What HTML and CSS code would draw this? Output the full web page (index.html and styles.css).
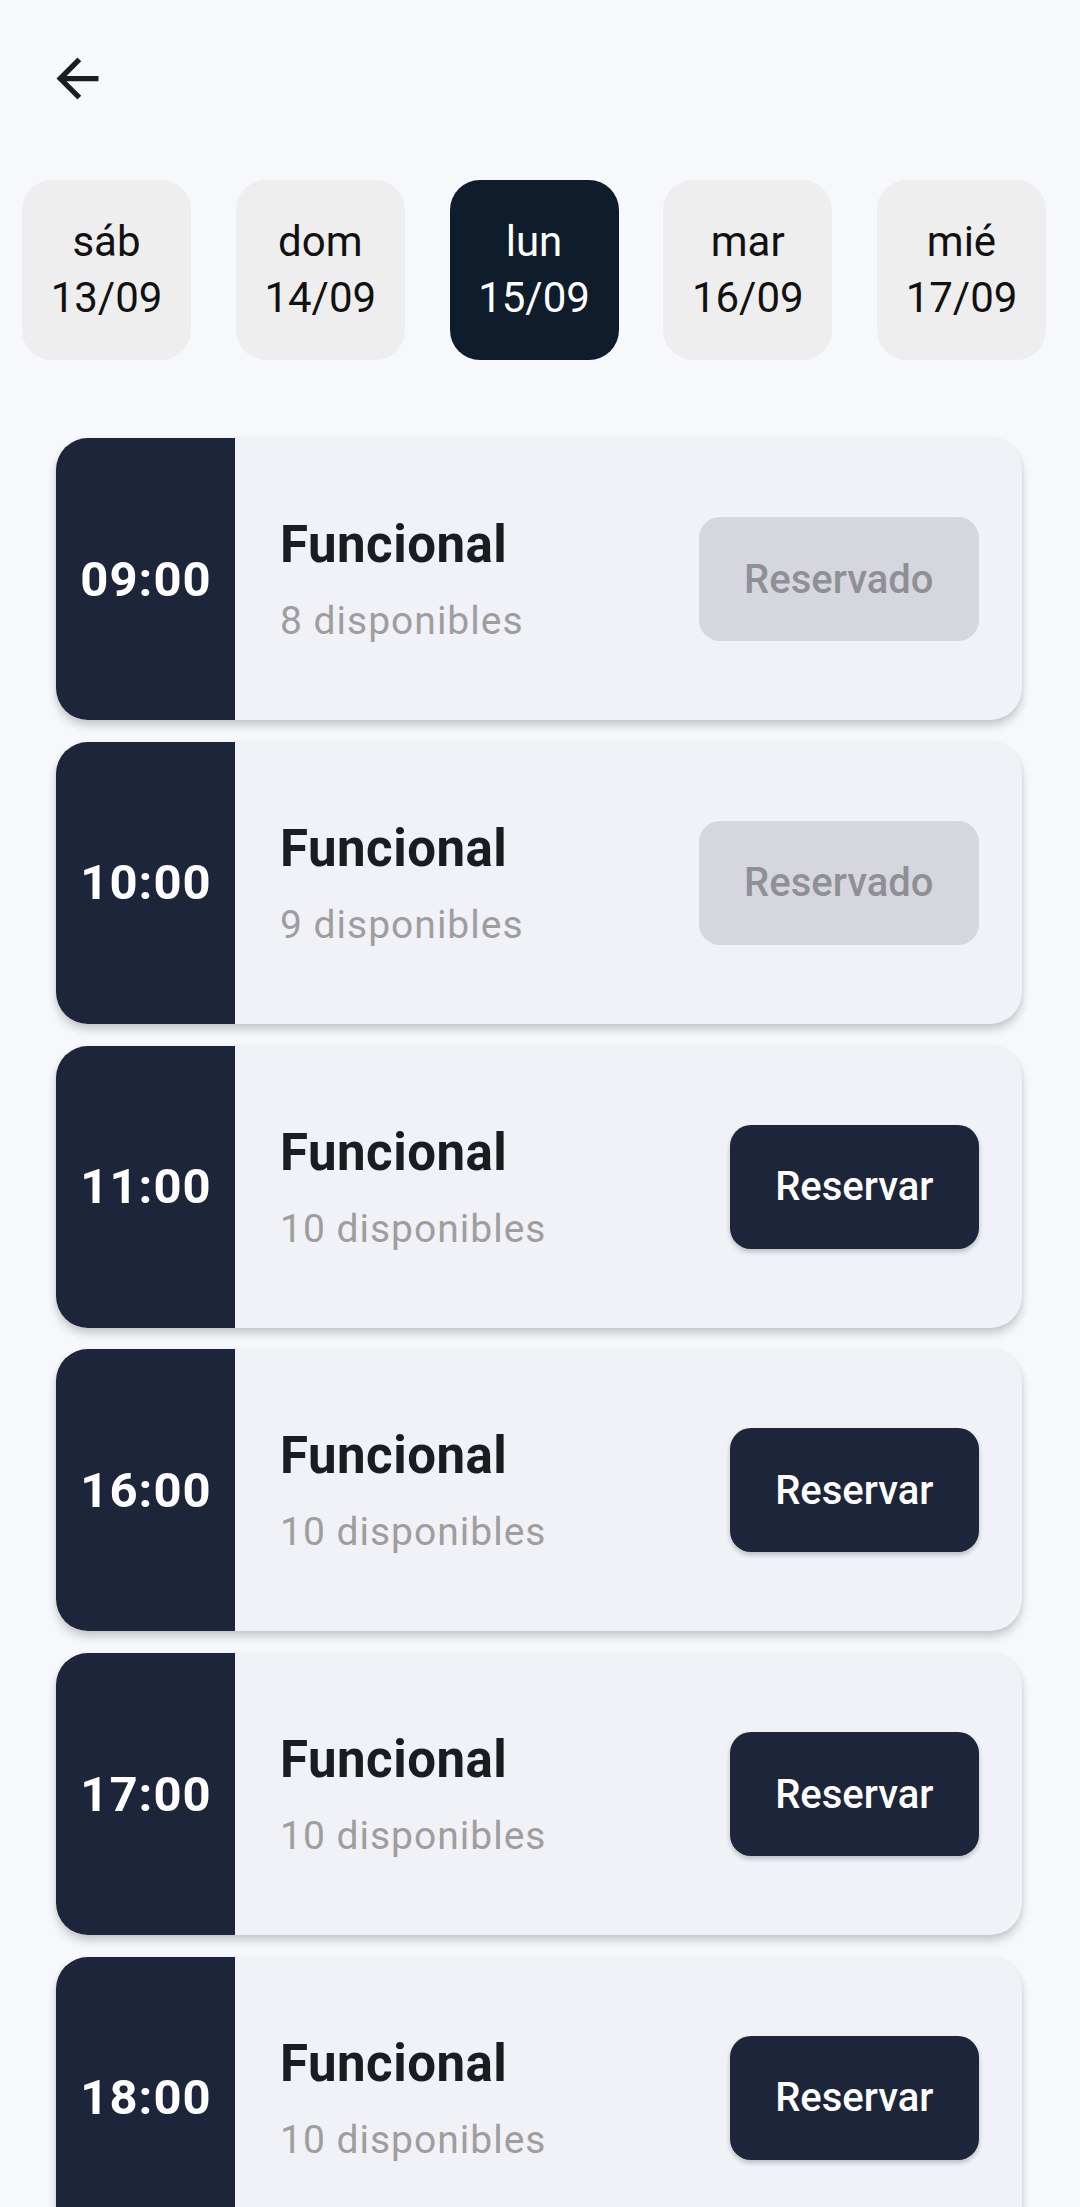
FILE: index.html
```html
<!DOCTYPE html>
<html lang="es">
<head>
<meta charset="utf-8">
<title>Clases</title>
<link rel="stylesheet" href="styles.css">
</head>
<body>
<div class="screen">
  <header class="topbar">
    <button class="back" aria-label="Volver">
      <svg viewBox="0 0 24 24" width="63" height="63"><path d="M20 11H7.83l5.59-5.59L12 4l-8 8 8 8 1.41-1.41L7.83 13H20v-2z" fill="#1c1d21"/></svg>
    </button>
  </header>

  <nav class="days">
    <div class="day"><span>sáb</span><span>13/09</span></div>
    <div class="day"><span>dom</span><span>14/09</span></div>
    <div class="day day-active"><span>lun</span><span>15/09</span></div>
    <div class="day"><span>mar</span><span>16/09</span></div>
    <div class="day"><span>mié</span><span>17/09</span></div>
  </nav>

  <main class="slots">
    <div class="slot">
      <div class="slot-time">09:00</div>
      <div class="slot-body">
        <div class="slot-info"><div class="slot-title">Funcional</div><div class="slot-sub">8 disponibles</div></div>
        <button class="btn btn-done">Reservado</button>
      </div>
    </div>
    <div class="slot">
      <div class="slot-time">10:00</div>
      <div class="slot-body">
        <div class="slot-info"><div class="slot-title">Funcional</div><div class="slot-sub">9 disponibles</div></div>
        <button class="btn btn-done">Reservado</button>
      </div>
    </div>
    <div class="slot">
      <div class="slot-time">11:00</div>
      <div class="slot-body">
        <div class="slot-info"><div class="slot-title">Funcional</div><div class="slot-sub">10 disponibles</div></div>
        <button class="btn btn-book">Reservar</button>
      </div>
    </div>
    <div class="slot">
      <div class="slot-time">16:00</div>
      <div class="slot-body">
        <div class="slot-info"><div class="slot-title">Funcional</div><div class="slot-sub">10 disponibles</div></div>
        <button class="btn btn-book">Reservar</button>
      </div>
    </div>
    <div class="slot">
      <div class="slot-time">17:00</div>
      <div class="slot-body">
        <div class="slot-info"><div class="slot-title">Funcional</div><div class="slot-sub">10 disponibles</div></div>
        <button class="btn btn-book">Reservar</button>
      </div>
    </div>
    <div class="slot">
      <div class="slot-time">18:00</div>
      <div class="slot-body">
        <div class="slot-info"><div class="slot-title">Funcional</div><div class="slot-sub">10 disponibles</div></div>
        <button class="btn btn-book">Reservar</button>
      </div>
    </div>
  </main>
</div>
</body>
</html>
```
FILE: styles.css
```css
html, body {
  margin: 0;
  padding: 0;
  background: #f7f8fc;
  overflow: hidden;
}
body {
  font-family: Roboto, "Noto Sans", "Liberation Sans", sans-serif;
  color: #1a1c1f;
}
.screen {
  width: 1080px;
  height: 2207px;
  overflow: hidden;
}
.topbar {
  height: 180px;
  box-sizing: border-box;
  padding: 47px 0 0 46px;
}
.back {
  display: block;
  width: 63px;
  height: 63px;
  padding: 0;
  border: 0;
  background: none;
}
.back svg { display: block; }

.days {
  display: flex;
  gap: 44.75px;
  padding-left: 22px;
}
.day {
  width: 169px;
  height: 180px;
  border-radius: 30px;
  background: #eeeeee;
  color: #111111;
  display: flex;
  flex-direction: column;
  align-items: center;
  justify-content: center;
  font-size: 42px;
  line-height: 56px;
}
.day-active {
  background: #0f1c2c;
  color: #ffffff;
}

.slots {
  display: flex;
  flex-direction: column;
  gap: 21.8px;
  padding: 78px 0 0 56px;
}
.slot {
  width: 966px;
  height: 282px;
  display: flex;
  border-radius: 32px;
  background: #f1f2f7;
  overflow: hidden;
  box-shadow: 0 6px 10px rgba(0, 0, 0, 0.18), 0 1px 4px rgba(0, 0, 0, 0.06);
  flex-shrink: 0;
}
.slot-time {
  width: 179px;
  flex-shrink: 0;
  background: #1c2539;
  color: #ffffff;
  display: flex;
  align-items: center;
  justify-content: center;
  font-weight: 700;
  font-size: 49px;
  letter-spacing: 1px;
  padding-left: 1px;
  box-sizing: border-box;
}
.slot-body {
  flex: 1;
  display: flex;
  align-items: center;
  justify-content: space-between;
  padding: 0 43px 0 45px;
}
.slot-info {
  display: flex;
  flex-direction: column;
  margin-top: 2px;
}
.slot-title {
  font-size: 51px;
  line-height: 58px;
  font-weight: 700;
  letter-spacing: 0.5px;
  color: #1a1c20;
}
.slot-sub {
  margin-top: 24px;
  font-size: 39px;
  line-height: 46px;
  letter-spacing: 1px;
  color: #9e9e9e;
}
.btn {
  height: 124px;
  border: 0;
  border-radius: 21px;
  padding: 0 45.5px;
  font-family: Roboto, "Noto Sans", "Liberation Sans", sans-serif;
  font-size: 40px;
  font-weight: 500;
}
.btn-done {
  background: #d6d7de;
  color: #8f9095;
}
.btn-book {
  background: #1c2539;
  color: #ffffff;
  box-shadow: 0 3px 5px rgba(0, 0, 0, 0.22);
}
```
